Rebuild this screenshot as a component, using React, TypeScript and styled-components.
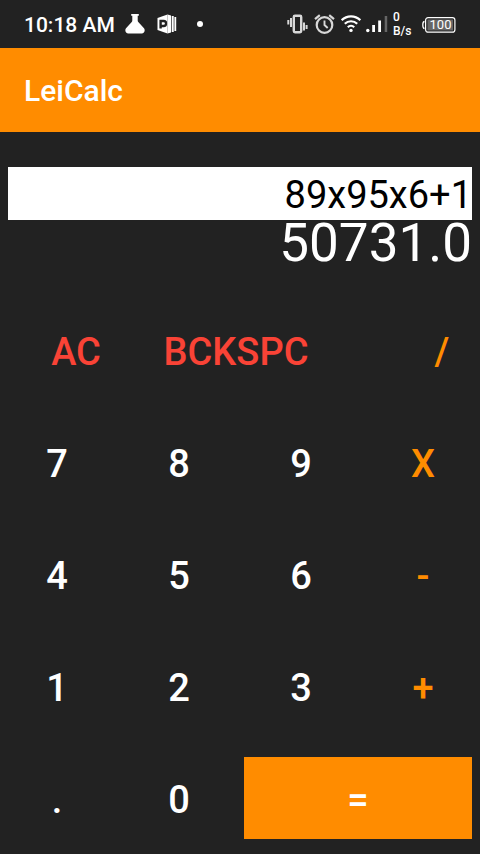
import React, { useState } from "react";
import styled, { createGlobalStyle } from "styled-components";

const ORANGE = "#ff8c00";
const RED = "#f94336";
const WHITE = "#ffffff";

const GlobalStyle = createGlobalStyle`
  * { box-sizing: border-box; }
  body {
    margin: 0;
    background: #222222;
    color: ${WHITE};
    font-family: Roboto, sans-serif;
  }
`;

const Page = styled.div`
  min-height: 100vh;
  display: flex;
  flex-direction: column;
`;

const StatusBar = styled.div`
  height: 48px;
  padding: 0 24px;
  display: flex;
  align-items: center;
  justify-content: space-between;
`;

const StatusGroup = styled.div<{ $gap: number }>`
  display: flex;
  align-items: center;
  gap: ${(p) => p.$gap}px;

  svg { display: block; flex: none; }
`;

const Clock = styled.time`
  padding-top: 2px;
  font-size: 21px;
  font-weight: 500;
  line-height: 46px;
  white-space: nowrap;
`;

const Speed = styled.div`
  width: 19px;
  margin-right: 5px;
  font-size: 12px;
  font-weight: 500;
  line-height: 14px;
  white-space: nowrap;
`;

const Battery = styled.div`
  position: relative;
  width: 34px;
  height: 18px;
  padding-top: 2px;
  display: flex;

  svg { position: absolute; inset: 2px 0 0; }
`;

const BatteryLevel = styled.span`
  position: relative;
  flex: 1;
  padding-left: 3px;
  text-align: center;
  font-size: 13px;
  line-height: 16px;
`;

const AppBar = styled.header`
  height: 84px;
  padding: 2px 24px 0;
  display: flex;
  align-items: center;
  background: ${ORANGE};
`;

const Title = styled.h1`
  margin: 0;
  font-size: 30px;
  font-weight: 500;
  line-height: 36px;
`;

const Calculator = styled.main`
  flex: 1;
  padding: 35px 8px 15px;
  display: flex;
  flex-direction: column;
`;

const Expression = styled.input`
  width: 100%;
  height: 53px;
  padding: 2px 0 0;
  border: 0;
  border-radius: 0;
  outline: 0;
  background: ${WHITE};
  color: #000000;
  font: 400 38px Roboto, sans-serif;
  text-align: right;
`;

const Result = styled.output`
  display: block;
  text-align: right;
  font-size: 53px;
  line-height: 46px;
`;

const Keypad = styled.div`
  margin-top: auto;
  display: flex;
  flex-direction: column;
  gap: 30px;
`;

const KeyRow = styled.div<{ $columns: string; $gap: number }>`
  display: grid;
  grid-template-columns: ${(p) => p.$columns};
  column-gap: ${(p) => p.$gap}px;
`;

const Key = styled.button<{ $color?: string; $fill?: string }>`
  min-width: 0;
  height: 82px;
  padding: 4px 0 0;
  border: 0;
  border-radius: 0;
  background: ${(p) => p.$fill ?? "transparent"};
  color: ${(p) => p.$color ?? WHITE};
  font: 500 38px Roboto, sans-serif;
  cursor: pointer;
`;

const FlaskIcon = () => (
  <svg width="20" height="20" viewBox="0 0 20 20" fill="#fff" aria-hidden="true">
    <path d="M6.200 0h7.600v1.800h-1.100v4.700c0 .8.300 1.200.8 1.700l5.500 6c1.600 2.200.2 5.300-2.300 5.300H3.300C.8 19.500-.6 16.400 1 14.200l5.500-6c.5-.5.8-.9.8-1.700V1.800H6.200z" />
  </svg>
);

const DocumentsIcon = () => (
  <svg width="20" height="20" viewBox="0 0 20 20" aria-hidden="true">
    <path d="M.5 4 10.500.500v19L.500 16z" fill="#fff" />
    <path d="M3.600 14.500V7h3a2.500 2.500 0 0 1 0 5h-3" fill="none" stroke="#222" strokeWidth="2.400" />
    <path d="M10.500.500 14 1.500v17l-3.500 1zM14.700 2h2v16h-2zM17.400 3h1.800v14h-1.800z" fill="#fff" />
  </svg>
);

const DotIcon = () => (
  <svg width="6" height="6" viewBox="0 0 6 6" aria-hidden="true">
    <circle cx="3" cy="3" r="3" fill="#fff" />
  </svg>
);

const VibrateIcon = () => (
  <svg width="22" height="20" viewBox="0 0 22 20" fill="none" stroke="#d8d8d8" aria-hidden="true">
    <rect x="6.800" y="1.800" width="7.400" height="16.400" rx="1.200" strokeWidth="2.400" />
    <path d="M4 4v9M1.300 6v4.500M17 8.500v8M19.600 11v4" strokeWidth="2" />
  </svg>
);

const AlarmIcon = () => (
  <svg width="22" height="20" viewBox="0 0 22 20" fill="none" stroke="#d8d8d8" strokeWidth="2.200" aria-hidden="true">
    <circle cx="10.500" cy="11" r="7.800" />
    <path d="M10.500 6.500V11l3.200 3" strokeWidth="1.900" />
    <path d="M1 5.200 5.800 1.200M20 5.200l-4.800-4" />
  </svg>
);

const WifiIcon = () => (
  <svg width="20" height="20" viewBox="0 0 20 20" fill="none" stroke="#fff" strokeWidth="2.200" aria-hidden="true">
    <path d="M.7 6.200a13.200 13.200 0 0 1 18.600 0M3.800 9.800a8.800 8.800 0 0 1 12.400 0M6.800 13.200a4.600 4.600 0 0 1 6.400 0" />
    <circle cx="10" cy="16.400" r="1.700" fill="#fff" stroke="none" />
  </svg>
);

const SignalIcon = () => (
  <svg width="22" height="18" viewBox="0 0 22 18" fill="#fff" aria-hidden="true">
    <circle cx="1.800" cy="15.500" r="1.700" />
    <path d="M6.200 10H9v7H6.200zM12.200 5.500H15V17h-2.800z" />
    <path d="M18.700 1h2.500v16h-2.500z" fill="#666" />
  </svg>
);

const BatteryShape = () => (
  <svg width="34" height="16" viewBox="0 0 34 16" aria-hidden="true">
    <rect x="3.600" y=".6" width="29.300" height="14.600" rx="2.500" fill="#222" stroke="#fff" strokeWidth="1.200" />
    <path d="M5.500 2.500H31v11H5.500z" fill="#666" />
    <path d="M2.500 4.500C1 4.500.8 5.500.8 8s.2 3.500 1.700 3.500" fill="none" stroke="#fff" strokeWidth="1.300" />
  </svg>
);

type KeyDef = { label: string; name?: string; color?: string; fill?: string };

const digits: KeyDef[][] = [
  [{ label: "7" }, { label: "8" }, { label: "9" }, { label: "X", name: "multiply", color: ORANGE }],
  [{ label: "4" }, { label: "5" }, { label: "6" }, { label: "-", name: "subtract", color: ORANGE }],
  [{ label: "1" }, { label: "2" }, { label: "3" }, { label: "+", name: "add", color: ORANGE }],
];

function calculate(source: string): string {
  const tokens = source.match(/\d*\.?\d+|[x/+-]/g) ?? [];
  let total = 0;
  let term = Number(tokens[0] ?? 0);
  for (let i = 1; i + 1 < tokens.length; i += 2) {
    const value = Number(tokens[i + 1]);
    if (tokens[i] === "x") term *= value;
    else if (tokens[i] === "/") term /= value;
    else {
      total += term;
      term = tokens[i] === "-" ? -value : value;
    }
  }
  const answer = total + term;
  return Number.isInteger(answer) ? answer.toFixed(1) : String(answer);
}

export default function App() {
  const [expression, setExpression] = useState("89x95x6+1");
  const [result, setResult] = useState("50731.0");

  const press = (label: string) => {
    if (label === "AC") {
      setExpression("");
      setResult("");
    } else if (label === "BCKSPC") setExpression((v) => v.slice(0, -1));
    else if (label === "=") setResult(calculate(expression));
    else setExpression((v) => v + label.toLowerCase());
  };

  const renderKey = ({ label, name, color, fill }: KeyDef) => (
    <Key key={label} type="button" aria-label={name} $color={color} $fill={fill} onClick={() => press(label)}>
      {label}
    </Key>
  );

  return (
    <Page>
      <GlobalStyle />
      <StatusBar>
        <StatusGroup $gap={10}>
          <Clock>10:18 AM</Clock>
          <StatusGroup $gap={12}>
            <FlaskIcon />
            <StatusGroup $gap={20}>
              <DocumentsIcon />
              <DotIcon />
            </StatusGroup>
          </StatusGroup>
        </StatusGroup>
        <StatusGroup $gap={5}>
          <VibrateIcon />
          <AlarmIcon />
          <WifiIcon />
          <SignalIcon />
          <Speed>0<br />B/s</Speed>
          <Battery>
            <BatteryShape />
            <BatteryLevel>100</BatteryLevel>
          </Battery>
        </StatusGroup>
      </StatusBar>
      <AppBar>
        <Title>LeiCalc</Title>
      </AppBar>
      <Calculator>
        <Expression
          aria-label="Expression"
          value={expression}
          onChange={(e) => setExpression(e.target.value)}
        />
        <Result>{result}</Result>
        <Keypad>
          <KeyRow $columns="320fr 60fr" $gap={84}>
            <KeyRow $columns="136fr 184fr" $gap={0}>
              {[{ label: "AC", color: RED }, { label: "BCKSPC", color: RED }].map(renderKey)}
            </KeyRow>
            {renderKey({ label: "/", name: "divide", color: ORANGE })}
          </KeyRow>
          {digits.map((row) => (
            <KeyRow key={row[0].label} $columns="repeat(4, 1fr)" $gap={24}>
              {row.map(renderKey)}
            </KeyRow>
          ))}
          <KeyRow $columns="220fr 228fr" $gap={16}>
            <KeyRow $columns="repeat(2, 1fr)" $gap={24}>
              {[{ label: "." }, { label: "0" }].map(renderKey)}
            </KeyRow>
            {renderKey({ label: "=", name: "equals", fill: ORANGE })}
          </KeyRow>
        </Keypad>
      </Calculator>
    </Page>
  );
}
